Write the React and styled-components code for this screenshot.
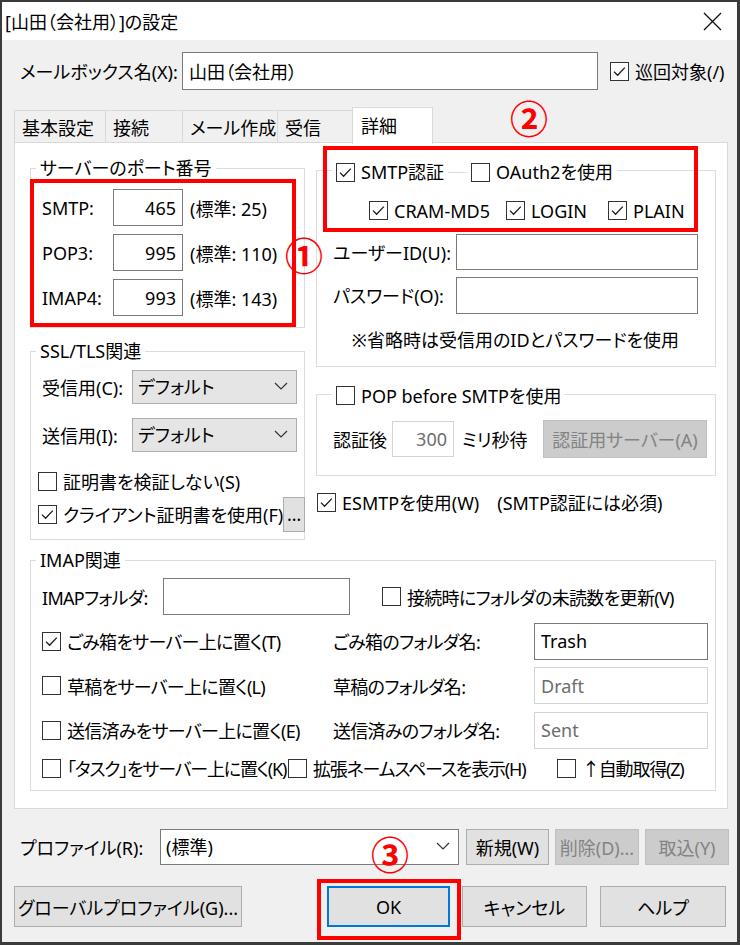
import React from "react";
import styled, { createGlobalStyle } from "styled-components";

const GlobalStyle = createGlobalStyle`
  html, body { margin: 0; padding: 0; background: #fff; }
  body {
    font-family: "Noto Sans", "Noto Sans CJK JP", sans-serif;
    font-size: 18px;
    color: #000;
    font-feature-settings: "palt";
  }
  * { box-sizing: border-box; }
`;

const Window = styled.div`
  position: relative;
  width: 740px;
  height: 945px;
  border-style: solid;
  border-color: #3b3b3b;
  border-width: 2px 3px 3px 2px;
  background: #f0f0f0;
  display: flex;
  flex-direction: column;
  overflow: hidden;
`;

const TitleBar = styled.div`
  height: 38px;
  flex: none;
  background: #fff;
  display: flex;
  align-items: center;
  justify-content: space-between;
  padding: 0 15px 0 3px;
  font-size: 18px;
`;

const Body = styled.div`
  padding: 12px 9px 0 12px;
  display: flex;
  flex-direction: column;
`;

const Row = styled.div`
  display: flex;
  align-items: center;
  height: ${(p) => p.$h || 24}px;
  margin-top: ${(p) => p.$mt || 0}px;
  margin-left: ${(p) => p.$ml || 0}px;
  white-space: nowrap;
  letter-spacing: ${(p) => (p.$tight ? "-1.2px" : "inherit")};
`;

const Label = styled.span`
  flex: none;
  width: ${(p) => (p.$w ? `${p.$w}px` : "auto")};
  margin-left: ${(p) => p.$ml || 0}px;
  white-space: nowrap;
`;

const Field = styled.div`
  flex: none;
  width: ${(p) => p.$w}px;
  height: ${(p) => p.$h || 37}px;
  background: #fff;
  border: 1px solid ${(p) => (p.$disabled ? "#d4d4d4" : "#7a7a7a")};
  color: ${(p) => (p.$disabled ? "#6d6d6d" : "#000")};
  display: flex;
  align-items: center;
  justify-content: ${(p) => (p.$right ? "flex-end" : "flex-start")};
  padding: 0 6px;
  margin-left: ${(p) => p.$ml || 0}px;
  letter-spacing: 0;
`;

const Combo = styled.div`
  flex: none;
  width: ${(p) => p.$w}px;
  height: ${(p) => p.$h || 34}px;
  background: ${(p) => (p.$white ? "#fff" : "#e5e5e5")};
  border: 1px solid ${(p) => (p.$white ? "#7a7a7a" : "#adadad")};
  display: flex;
  align-items: center;
  justify-content: space-between;
  padding: 0 8px 2px 5px;
  margin-left: ${(p) => p.$ml || 0}px;
`;

const Button = styled.div`
  flex: none;
  width: ${(p) => p.$w}px;
  height: ${(p) => p.$h || 36}px;
  margin-left: ${(p) => (p.$auto ? "auto" : `${p.$ml || 0}px`)};
  background: ${(p) => (p.$disabled ? "#cccccc" : "#e1e1e1")};
  border: ${(p) =>
    p.$default ? "2px solid #0078d7" : p.$disabled ? "1px solid #bfbfbf" : "1px solid #adadad"};
  color: ${(p) => (p.$disabled ? "#838383" : "#000")};
  display: flex;
  align-items: center;
  justify-content: center;
  white-space: nowrap;
`;

const Tabs = styled.div`
  display: flex;
  align-items: flex-end;
  height: 35px;
  margin-top: 17px;
  position: relative;
  z-index: 1;
`;

const Tab = styled.div`
  width: ${(p) => p.$w}px;
  height: ${(p) => (p.$active ? 37 : 32)}px;
  margin-bottom: ${(p) => (p.$active ? -2 : 0)}px;
  margin-right: -1px;
  background: ${(p) => (p.$active ? "#fff" : "#f0f0f0")};
  border: 1px solid #d9d9d9;
  border-bottom: none;
  display: flex;
  align-items: center;
  white-space: nowrap;
  overflow: hidden;
  padding: ${(p) => (p.$active ? "0 0 2px 8px" : "0 0 0 7px")};
`;

const Panel = styled.div`
  background: #fff;
  border: 1px solid #d9d9d9;
  padding: 0 11px 17px 15px;
`;

const TopGrid = styled.div`
  display: grid;
  grid-template-columns: 275px 400px;
  column-gap: 11px;
  align-items: start;
  margin-top: 13px;
`;

const Column = styled.div`
  display: flex;
  flex-direction: column;
`;

const GroupBox = styled.fieldset`
  margin: ${(p) => p.$mt || 0}px 0 0 0;
  padding: 0;
  min-width: 0;
  border: 1px solid #dcdcdc;
`;

const Legend = styled.legend`
  margin-left: ${(p) => p.$offset || 5}px;
  padding: ${(p) => (p.$tall ? "4px 4px 0" : "0 4px")};
  line-height: 24px;
  white-space: nowrap;
`;

const LegendInner = styled.span`
  display: inline-flex;
  align-items: center;
`;

const GroupBody = styled.div`
  padding: ${(p) => p.$pad};
  display: flex;
  flex-direction: column;
`;

const Spacer = styled.span`
  display: inline-block;
  width: ${(p) => p.$w}px;
  height: 1px;
  background: #dcdcdc;
  margin: 0 4px;
`;

const CheckLabel = styled.span`
  display: inline-flex;
  align-items: center;
  gap: 6px;
  flex: none;
  width: ${(p) => (p.$w ? `${p.$w}px` : "auto")};
  max-width: ${(p) => (p.$max ? `${p.$max}px` : "none")};
  overflow: ${(p) => (p.$max ? "hidden" : "visible")};
  margin-left: ${(p) => p.$ml || 0}px;
  margin-top: ${(p) => p.$mt || 0}px;
  white-space: nowrap;
`;

const Box = styled.span`
  flex: none;
  width: 19px;
  height: 19px;
  border: 1px solid #333;
  background: #fff;
  display: inline-flex;
  align-items: center;
  justify-content: center;
`;

const Note = styled.div`
  height: 24px;
  margin-top: 14px;
  text-align: center;
  line-height: 24px;
  white-space: nowrap;
`;

const FolderGrid = styled.div`
  display: grid;
  grid-template-columns: 291px 201px 174px;
  align-items: center;
  height: 37px;
  white-space: nowrap;
`;

const ImapRows = styled.div`
  display: flex;
  flex-direction: column;
  gap: 7.5px;
  letter-spacing: -0.7px;
`;

const Mark = styled.div`
  position: absolute;
  left: ${(p) => p.$x}px;
  top: ${(p) => p.$y}px;
  width: ${(p) => p.$w}px;
  height: ${(p) => p.$h}px;
  border: 4px solid #ff0000;
  pointer-events: none;
`;

const Circled = styled.span`
  position: absolute;
  left: ${(p) => p.$x - 20}px;
  top: ${(p) => p.$y - 20}px;
  width: 40px;
  height: 40px;
  display: flex;
  align-items: center;
  justify-content: center;
  color: #ff0000;
  font-family: "Noto Sans CJK JP", sans-serif;
  font-size: 38px;
  font-weight: 700;
  line-height: 1;
  font-feature-settings: normal;
`;

const Chevron = () => (
  <svg width="14" height="8" viewBox="0 0 14 8">
    <polyline points="1,1 7,7 13,1" fill="none" stroke="#333" strokeWidth="1.2" />
  </svg>
);

const Check = ({ checked, children, ...rest }) => (
  <CheckLabel {...rest}>
    <Box>
      {checked && (
        <svg width="17" height="17" viewBox="0 0 17 17">
          <path d="M3 8.6 L6.6 12.2 L13.8 4.6" fill="none" stroke="#1a1a1a" strokeWidth="1.3" />
        </svg>
      )}
    </Box>
    {children}
  </CheckLabel>
);

const ports = [
  { name: "SMTP:", value: "465", std: "25" },
  { name: "POP3:", value: "995", std: "110" },
  { name: "IMAP4:", value: "993", std: "143" },
];

const folders = [
  { check: "ごみ箱をサーバー上に置く(T)", checked: true, label: "ごみ箱のフォルダ名:", value: "Trash", disabled: false },
  { check: "草稿をサーバー上に置く(L)", checked: false, label: "草稿のフォルダ名:", value: "Draft", disabled: true },
  { check: "送信済みをサーバー上に置く(E)", checked: false, label: "送信済みのフォルダ名:", value: "Sent", disabled: true },
];

export default function App() {
  return (
    <>
      <GlobalStyle />
      <Window>
        <TitleBar>
          <span>[山田（会社用）]の設定</span>
          <svg width="19" height="19" viewBox="0 0 19 19">
            <path d="M1 1 L18 18 M18 1 L1 18" stroke="#111" strokeWidth="1.3" />
          </svg>
        </TitleBar>

        <Body>
          <Row $h={38} $ml={6}>
            <Label $w={162}>メールボックス名(X):</Label>
            <Field $w={416} $h={38}>山田（会社用）</Field>
            <Check checked $ml={12}>巡回対象(/)</Check>
          </Row>

          <Tabs>
            <Tab $w={92}>基本設定</Tab>
            <Tab $w={78}>接続</Tab>
            <Tab $w={96}>メール作成</Tab>
            <Tab $w={76}>受信</Tab>
            <Tab $w={81} $active>詳細</Tab>
          </Tabs>

          <Panel>
            <TopGrid>
              <Column>
                <GroupBox>
                  <Legend>サーバーのポート番号</Legend>
                  <GroupBody $pad="9px 6px 11px 11px">
                    {ports.map((p, i) => (
                      <Row key={p.name} $h={37} $mt={i ? 8 : 0}>
                        <Label $w={71}>{p.name}</Label>
                        <Field $w={70} $right>{p.value}</Field>
                        <Label $ml={7}>(標準: {p.std})</Label>
                      </Row>
                    ))}
                  </GroupBody>
                </GroupBox>

                <GroupBox $mt={11}>
                  <Legend>SSL/TLS関連</Legend>
                  <GroupBody $pad="7px 6px 8px 11px">
                    <Row $h={34}>
                      <Label $w={90}>受信用(C):</Label>
                      <Combo $w={165}>デフォルト<Chevron /></Combo>
                    </Row>
                    <Row $h={34} $mt={14}>
                      <Label $w={90}>送信用(I):</Label>
                      <Combo $w={165}>デフォルト<Chevron /></Combo>
                    </Row>
                    <Row $h={32} $mt={13} $ml={-4}>
                      <Check>証明書を検証しない(S)</Check>
                    </Row>
                    <Row $h={34} $ml={-4}>
                      <Check checked>クライアント証明書を使用(F)</Check>
                      <Button $w={22} $h={35} $auto>…</Button>
                    </Row>
                  </GroupBody>
                </GroupBox>
              </Column>

              <Column>
                <GroupBox>
                  <Legend $offset={15} $tall>
                    <LegendInner>
                      <Check checked>SMTP認証</Check>
                      <Spacer $w={19} />
                      <Check>OAuth2を使用</Check>
                    </LegendInner>
                  </Legend>
                  <GroupBody $pad="13px 17px 14px 16px">
                    <Row $ml={36}>
                      <Check checked $w={137}>CRAM-MD5</Check>
                      <Check checked $w={102}>LOGIN</Check>
                      <Check checked>PLAIN</Check>
                    </Row>
                    <Row $h={36} $mt={11}>
                      <Label $w={123}>ユーザーID(U):</Label>
                      <Field $w={242} $h={36} />
                    </Row>
                    <Row $h={37} $mt={7}>
                      <Label $w={123}>パスワード(O):</Label>
                      <Field $w={242} />
                    </Row>
                    <Note>※省略時は受信用のIDとパスワードを使用</Note>
                  </GroupBody>
                </GroupBox>

                <GroupBox $mt={13}>
                  <Legend $offset={15} $tall>
                    <Check $max={224}>POP before SMTPを使用</Check>
                  </Legend>
                  <GroupBody $pad="10px 8px 17px 16px">
                    <Row $h={38}>
                      <Label $w={59}>認証後</Label>
                      <Field $w={62} $h={36} $right $disabled>300</Field>
                      <Label $ml={8}>ミリ秒待</Label>
                      <Button $w={164} $h={38} $auto $disabled>認証用サーバー(A)</Button>
                    </Row>
                  </GroupBody>
                </GroupBox>

                <Row $mt={14} $ml={1}>
                  <Check checked>ESMTPを使用(W)　(SMTP認証には必須)</Check>
                </Row>
              </Column>
            </TopGrid>

            <GroupBox $mt={8}>
              <Legend>IMAP関連</Legend>
              <GroupBody $pad="6px 8px 10px 11px">
                <ImapRows>
                  <Row $h={37}>
                    <Label $w={121}>IMAPフォルダ:</Label>
                    <Field $w={187} />
                    <Check $ml={32}>接続時にフォルダの未読数を更新(V)</Check>
                  </Row>
                  {folders.map((f) => (
                    <FolderGrid key={f.value}>
                      <Check checked={f.checked}>{f.check}</Check>
                      <span>{f.label}</span>
                      <Field $w={174} $disabled={f.disabled}>{f.value}</Field>
                    </FolderGrid>
                  ))}
                  <Row $tight>
                    <Check $w={246}>「タスク」をサーバー上に置く(K)</Check>
                    <Check $w={269}>拡張ネームスペースを表示(H)</Check>
                    <Check>↑自動取得(Z)</Check>
                  </Row>
                </ImapRows>
              </GroupBody>
            </GroupBox>
          </Panel>

          <Row $h={36} $mt={20}>
            <Label $w={140} $ml={6}>プロファイル(R):</Label>
            <Combo $w={299} $h={36} $white>(標準)<Chevron /></Combo>
            <Button $w={83} $ml={7}>新規(W)</Button>
            <Button $w={84} $ml={6} $disabled>削除(D)...</Button>
            <Button $w={84} $ml={6} $disabled>取込(Y)</Button>
          </Row>

          <Row $h={41} $mt={21}>
            <Button $w={228} $h={41}>グローバルプロファイル(G)...</Button>
            <Button $w={123} $h={41} $ml={85} $default>OK</Button>
            <Button $w={125} $h={41} $ml={12}>キャンセル</Button>
            <Button $w={126} $h={41} $ml={13}>ヘルプ</Button>
          </Row>
        </Body>

        <Mark $x={28} $y={177} $w={266} $h={148} />
        <Mark $x={321} $y={144} $w={375} $h={86} />
        <Mark $x={315} $y={877} $w={144} $h={61} />
        <Circled $x={302} $y={252}>①</Circled>
        <Circled $x={527} $y={115}>②</Circled>
        <Circled $x={388} $y={851}>③</Circled>
      </Window>
    </>
  );
}
